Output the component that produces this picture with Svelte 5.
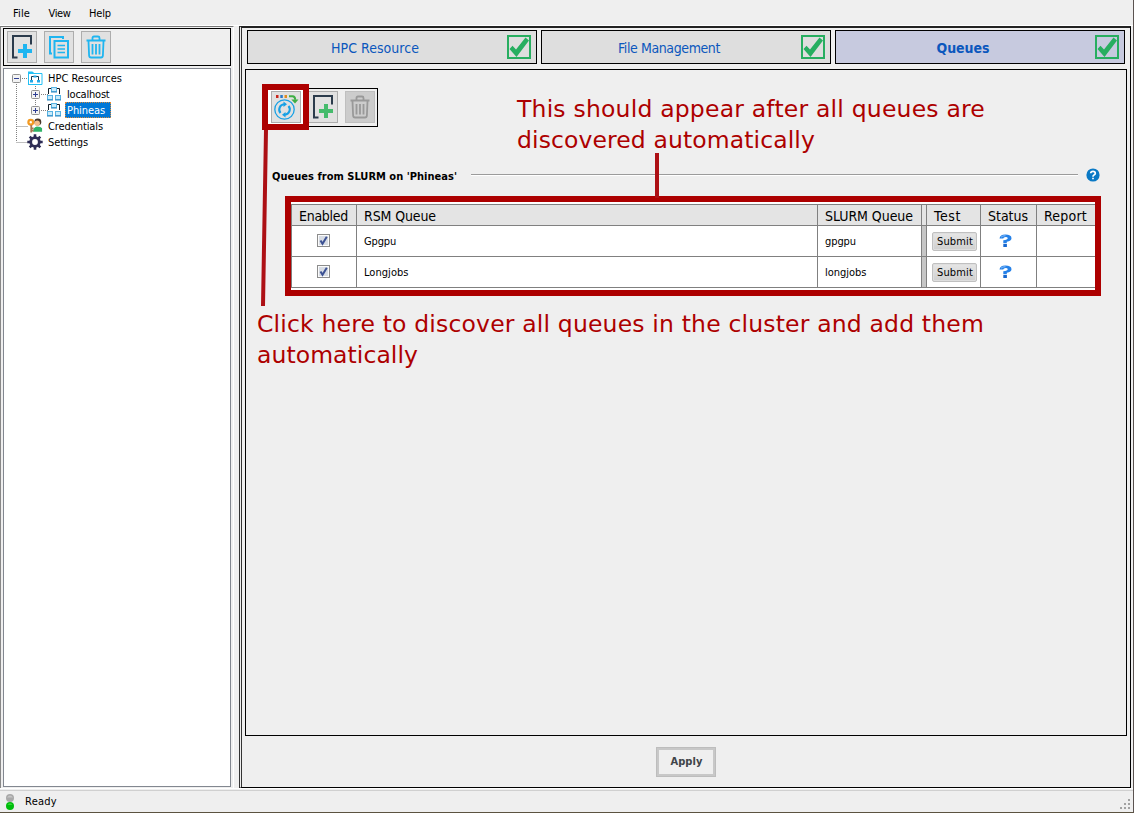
<script>
  const menus = [
    { label: 'File', width: 17 },
    { label: 'View', width: 22 },
    { label: 'Help', width: 22 }
  ];
  const tabs = [
    { label: 'HPC Resource', width: 88, active: false },
    { label: 'File Management', width: 102, active: false },
    { label: 'Queues', width: 53, active: true }
  ];
  const tree = [
    { label: 'HPC Resources', icon: 'folder', level: 0, width: 74 },
    { label: 'localhost', icon: 'cluster', level: 1, width: 42.5 },
    { label: 'Phineas', icon: 'cluster', level: 1, width: 38, selected: true },
    { label: 'Credentials', icon: 'key', level: 0, width: 55 },
    { label: 'Settings', icon: 'gear', level: 0, width: 40 }
  ];
  const headers = [
    { label: 'Enabled', width: 49 },
    { label: 'RSM Queue', width: 72 },
    { label: 'SLURM Queue', width: 88 },
    { label: '' },
    { label: 'Test', width: 27 },
    { label: 'Status', width: 40 },
    { label: 'Report', width: 43 }
  ];
  const rows = [
    { name: 'Gpgpu', nameWidth: 32, queue: 'gpgpu', queueWidth: 31 },
    { name: 'Longjobs', nameWidth: 44.5, queue: 'longjobs', queueWidth: 41.5 }
  ];

  // Spreads the letters so that the label takes the given width.
  function fit(node, width) {
    if (!width) return;
    const natural = node.getBoundingClientRect().width;
    node.style.letterSpacing = (width - natural) / node.textContent.length + 'px';
  }
</script>

{#snippet trash(color)}
  <svg width="22" height="24" viewBox="0 0 22 24" fill="none" stroke={color} stroke-width="1.8">
    <path d="M1.5 5.5h19M7.5 5V3q0-1.5 1.5-1.5h4q1.5 0 1.5 1.5v2M3.5 6.5l.6 14q.1 2 2 2h9.8q1.900 0 2-2l.6-14" />
    <path d="M7.500 9v10.500M11 9v10.500M14.500 9v10.500" />
  </svg>
{/snippet}

{#snippet add(color)}
  <svg width="22" height="26" viewBox="0 0 22 26">
    <path d="M20 10.500V2H2V23.500H6.500" fill="none" stroke="#2b3b4c" stroke-width="2" />
    <path d="M14 10v14M7 17h14" stroke={color} stroke-width="4" />
  </svg>
{/snippet}

<div class="window">
  <nav class="menu">
    {#each menus as m}<span class="t" use:fit={m.width}>{m.label}</span>{/each}
  </nav>

  <div class="body">
    <aside>
      <div class="tools">
        <button>{@render add('#1fb5f0')}</button>
        <button>
          <svg width="22" height="24" viewBox="0 0 22 24" fill="none" stroke="#1fb5f0" stroke-width="2">
            <path d="M4 18.500H2V2h13v2" /><rect x="6.500" y="6" width="13.500" height="16.500" />
            <path d="M9.500 10.500h7.500M9.500 14h7.500M9.500 17.500h7.500" stroke-width="1.600" />
          </svg>
        </button>
        <button>{@render trash('#1fb5f0')}</button>
      </div>
      <div class="tree">
        <svg class="guides" width="48" height="82" viewBox="0 0 48 82">
          <g stroke="#808080" stroke-dasharray="1 1" fill="none">
            <path d="M12.500 13v60M18 9.500h6M12.500 57.500h12M12.500 73.500h12M31.500 15v27M37 25.500h7M37 41.500h7" />
          </g>
          {#each [[8, 5], [27, 21], [27, 37]] as [x, y], i}
            <rect x={x + 0.5} y={y + 0.5} width="8" height="8" rx="1" fill="#f3f3f3" stroke="#919191" />
            <path d={`M${x + 2} ${y + 4.500}h5`} stroke="#2f3f94" />
            {#if i}<path d={`M${x + 4.500} ${y + 2}v5`} stroke="#2f3f94" />{/if}
          {/each}
        </svg>
        {#each tree as n}
          <div class="node" class:child={n.level}>
            {#if n.icon === 'folder'}
              <svg width="16" height="16" viewBox="0 0 16 16">
                <path d="M1.500 14.500V2.500h5M6 3.500h9v11H1" fill="#fff" stroke="#22c0f5" />
                <path d="M1 1.500h4.500L7 4H1z" fill="#22c0f5" />
                <path d="M4.500 10.500V6.500h7v4" fill="none" stroke="#17364f" />
                <path d="M3 10h3v2.500H3zM10 10h3v2.500h-3zM6.500 5.500h3v2h-3z" fill="#22a8e8" />
              </svg>
            {:else if n.icon === 'cluster'}
              <svg width="16" height="16" viewBox="-1 0 16 16">
                <path d="M1.500 8V2.500h11V8" fill="none" stroke="#111d28" />
                <g fill="#c9ebfb" stroke="#58b2e2"><rect x="4.500" y="1.500" width="5" height="4" /><rect x=".5" y="9.500" width="5" height="4" /><rect x="8.500" y="9.500" width="5" height="4" /></g>
                <path d="M4 6h6M0 14h6M8 14h6" stroke="#2b86c0" />
              </svg>
            {:else if n.icon === 'key'}
              <svg width="17" height="16" viewBox="0 0 17 16">
                <circle cx="11.500" cy="3.700" r="3.700" fill="#49382a" /><circle cx="10.800" cy="5" r="2.900" fill="#f4bd8a" />
                <path d="M6.500 14q-.5-4 4-5.500 4.500.2 5.500 2V14z" fill="#2fb367" />
                <circle cx="4" cy="4" r="2.500" fill="#fff" stroke="#f39a22" stroke-width="2.400" />
                <path d="M4.500 7v8M5 10.500h2M5 13h2" stroke="#a77852" stroke-width="1.900" />
              </svg>
            {:else}
              <svg width="16" height="16" viewBox="0 0 16 16">
                <g stroke="#2d2c55" stroke-width="2.600"><path d="M8 .3v15.400M.3 8h15.400M2.700 2.700l10.600 10.600M13.300 2.700L2.700 13.300" /></g>
                <circle cx="8" cy="8" r="4.300" fill="#fff" stroke="#2d2c55" stroke-width="2.800" />
              </svg>
            {/if}
            <span class="name" class:selected={n.selected}><span class="t" use:fit={n.width}>{n.label}</span></span>
          </div>
        {/each}
      </div>
    </aside>

    <main>
      <div class="tabs">
        {#each tabs as tab}
          <div class="tab" class:active={tab.active}>
            <span class="t" use:fit={tab.width}>{tab.label}</span>
            <svg width="24" height="24" viewBox="0 0 24 24">
              <rect x="1" y="1" width="22" height="22" fill="none" stroke="#27ae60" stroke-width="2" />
              <path d="M2.500 14l3-3.200L9 14.500 18.500 2.500l3.500 3L9.500 22z" fill="#27ae60" />
            </svg>
          </div>
        {/each}
      </div>

      <section>
        <div class="tools queue-tools">
          <button>
            <svg width="26" height="28" viewBox="0 0 26 28" fill="none">
              <path d="M3 3.500h2.500" stroke="#c9261c" stroke-width="3" /><path d="M7.300 3.500h2.500" stroke="#2878c8" stroke-width="3" /><path d="M11.500 3.500H14" stroke="#e08b20" stroke-width="3" />
              <path d="M16 3.300h3.500q2.700 0 2.700 3.500" stroke="#3fae45" stroke-width="2" /><path d="M18.300 6.500h7.200L22 10.500z" fill="#3fae45" />
              <g stroke="#16a0e5"><circle cx="11.500" cy="16.500" r="9.700" stroke-width="1.300" />
                <path d="M7.500 20A5.300 5.300 0 0 1 11 11.300M15.500 13A5.300 5.300 0 0 1 12 21.700" stroke-width="2.100" /></g>
              <path d="M10.500 8.500v5.500l3.500-2.700zM12.500 24.500V19L9 21.700z" fill="#16a0e5" />
            </svg>
          </button>
          <button>{@render add('#45bb6c')}</button>
          <button class="off">{@render trash('#999')}</button>
        </div>

        <header>
          <b class="t" use:fit={185}>Queues from SLURM on 'Phineas'</b>
          <i></i>
          <svg width="14" height="14" viewBox="0 0 14 14"><circle cx="7" cy="7" r="6.600" fill="#0a79c5" />
            <path d="M4.700 5.300Q4.800 3.300 7 3.300T9.300 5.200Q9.300 6.300 8 7 7 7.500 7 8.700M7 9.700v1.600" fill="none" stroke="#fff" stroke-width="1.700" /></svg>
        </header>

        <div class="highlight">
          <div class="table">
            {#each headers as h}
              <div class="cell head" class:gap={!h.label}>{#if h.label}<span class="t" use:fit={h.width}>{h.label}</span>{/if}</div>
            {/each}
            {#each rows as r}
              <div class="cell center">
                <svg width="13" height="13" viewBox="0 0 13 13"><rect x=".5" y=".5" width="12" height="12" fill="#fbfbfb" stroke="#8c8c8c" /><rect x="2" y="2" width="9" height="9" fill="#d7dce4" />
                  <path d="M3.500 6.500l2 3.300L9.800 2.800" fill="none" stroke="#3c5193" stroke-width="2" /></svg>
              </div>
              <div class="cell"><span class="t" use:fit={r.nameWidth}>{r.name}</span></div>
              <div class="cell"><span class="t" use:fit={r.queueWidth}>{r.queue}</span></div>
              <div class="cell gap"></div>
              <div class="cell test"><span class="submit"><span class="t" use:fit={36}>Submit</span></span></div>
              <div class="cell status">
                <svg width="13" height="13" viewBox="0 0 13 13"><path d="M.5 4.500Q1 .5 6.300.5q6.200 0 6.200 3.700 0 2.800-4.700 3.600v1.400H4.300V6.300Q8.700 6 8.700 4.300 8.700 3 6.700 3 4.500 3 4.200 4.500z" fill="#2581e8" /><path d="M4.300 10h3.600v3H4.300z" fill="#1767cf" /><path d="M2 3.200Q3.500 1.600 6.500 1.700" stroke="#86bdf8" fill="none" /></svg>
              </div>
              <div class="cell"></div>
            {/each}
          </div>
        </div>
      </section>
      <footer><button class="apply"><b class="t" use:fit={32}>Apply</b></button></footer>
    </main>
  </div>

  <div class="statusbar">
    <svg width="10" height="18" viewBox="0 0 10 18"><circle cx="5" cy="5" r="4" fill="#a9a9a9" /><path d="M2 4.500q3-4 6 0" fill="#c6c6c6" /><circle cx="5" cy="13" r="4" fill="#00bd0c" /><path d="M2.500 12q2.500-3.500 5 0" fill="#35db35" /></svg>
    <span class="t" use:fit={32}>Ready</span>
    <svg class="grip" width="12" height="12" viewBox="0 0 12 12" fill="#a2a2a2"><path d="M8 0h2v2H8zM4 4h2v2H4zM8 4h2v2H8zM0 8h2v2H0zM4 8h2v2H4zM8 8h2v2H8z" /></svg>
  </div>

  <svg class="notes" width="1134" height="813" viewBox="0 0 1134 813">
    <path d="M268 90h35v34h-35zM271 91v32h30V91z" fill="#fff" fill-rule="evenodd" />
    <rect x="265" y="87" width="41" height="40" fill="none" stroke="#ad0000" stroke-width="6" />
    <path d="M266 130L263 306M657 153v45" stroke="#ad1015" stroke-width="4" />
  </svg>
  <div class="note top"><span class="t" use:fit={468}>This should appear after all queues are</span><span class="t" use:fit={298}>discovered automatically</span></div>
  <div class="note bottom"><span class="t" use:fit={727}>Click here to discover all queues in the cluster and add them</span><span class="t" use:fit={161}>automatically</span></div>
</div>

<style>
  :global(body) { margin: 0; }
  * { box-sizing: border-box; }
  svg { display: block; flex: none; }
  .t { display: inline-block; white-space: nowrap; flex: none; }
  .tab .t, .cell .t { padding-top: 2px; }
  .window { position: relative; width: 1134px; height: 813px; display: flex; flex-direction: column; overflow: hidden; background: #efefef; border-right: 1px solid #5b5351; border-bottom: 1px solid #5b5340; font: 11px/16px "DejaVu Sans Condensed", "DejaVu Sans", sans-serif; font-stretch: condensed; color: #000; }
  .menu { height: 26px; padding: 6px 13px 0; display: flex; gap: 18.500px; border-bottom: 1px solid #fff; flex: none; }
  .body { height: 763px; display: flex; border-bottom: 1px solid #fff; }
  aside { width: 234px; flex: none; padding: 1px 2px 0; border-top: 1px solid #777; border-left: 1px solid #888; border-right: 1px solid #fff; }
  .tools { display: flex; border: 1px solid #000; }
  aside .tools { width: 228px; height: 38px; padding: 2px 3px; gap: 7px; }
  .tools button { width: 30px; height: 32px; padding: 0; border: 1px solid #adadad; background: #e1e1e1; display: flex; align-items: center; justify-content: center; }
  .tools .off { background: #ccc; border-color: #bfbfbf; }
  .tree { position: relative; width: 228px; height: 719px; margin-top: 2px; padding-top: 1px; background: #fff; border: 1px solid #828790; }
  .guides { position: absolute; left: 0; top: 0; }
  .node { height: 16px; display: flex; padding-left: 23px; gap: 3px; position: relative; }
  .node.child { padding-left: 42px; }
  .node > svg { width: 16px; }
  .name { height: 16px; padding: 1px 2px 0; margin-right: 1px; }
  .name.selected { background: #0078d7; color: #fff; outline: 1px dotted #d98b3c; outline-offset: -1px; padding-right: 6px; }
  main { margin-left: 5px; width: 892px; border: 1px solid #000; border-left: 3px double #333; border-top: 2px solid #222; padding: 2px 3px 0; display: flex; flex-direction: column; }
  .tabs { display: flex; gap: 4px; padding-left: 2px; flex: none; }
  .tab { width: 290px; height: 34px; border: 1px solid #000; background: #dedede; display: grid; grid-template-columns: 264px 24px; justify-content: end; align-items: center; justify-items: center; padding-right: 5px; color: #0b57bd; font-size: 14px; }
  .tab.active { background: #c7cadf; font-weight: bold; }
  section { width: 882px; height: 667px; margin-top: 5px; border: 1px solid #000; padding: 18px 25px 0 22px; flex: none; }
  .queue-tools { width: 110px; height: 39px; padding: 2px; gap: 7px; }
  header { display: flex; align-items: center; height: 16px; margin: 40px 0 0 4px; }
  header .t { padding-top: 3px; }
  header i { margin-left: 14px; width: 607px; height: 2px; border-top: 1px solid #9b9b9b; border-bottom: 1px solid #fff; margin-top: -1px; }
  header svg { margin-left: 8px; }
  .highlight { width: 816px; height: 100px; margin: 13px 0 0 17px; border: 6px solid #ad0000; background: #fff; padding-top: 2px; }
  .table { display: grid; grid-template-columns: 65px 461px 104px 5px 54px 56px 58px; grid-template-rows: 21px 31px 31px; border-top: 1px solid #808080; border-left: 1px solid #808080; width: 804px; overflow: hidden; }
  .cell { border-right: 1px solid #808080; border-bottom: 1px solid #808080; padding-left: 7px; display: flex; align-items: center; }
  .cell:nth-child(7n) { border-right: 0; }
  .head { background: #e4e4e4; font-size: 14px; }
  .center { justify-content: center; padding: 0 2px 1px 0; }
  .gap { background: #c6c6c6; padding: 0; }
  .head.gap { background: #e4e4e4; }
  .test { padding-left: 5px; }
  .submit { width: 45px; height: 19px; border: 1px solid #c0c0c0; border-radius: 2px; background: linear-gradient(#e6e6e6, #cfcfcf); display: flex; align-items: center; padding-left: 4px; box-shadow: inset 0 0 0 1px #dedede; }
  .status { padding: 0 0 1px 18px; }
  footer { padding-top: 11px; display: flex; padding-left: 411px; }
  .apply { width: 60px; height: 30px; padding: 0 0 0 1px; border: 3px solid #c8c8c8; outline: 1px solid #bdbdbd; outline-offset: -1px; background: #efefef; font: inherit; color: #404448; display: flex; align-items: center; justify-content: center; }
  .statusbar { flex: 1; border-top: 1px solid #d0d0d0; margin-top: 1px; display: flex; align-items: center; padding-left: 5px; gap: 10px; }
  .grip { margin-left: auto; align-self: flex-end; margin-right: 1px; margin-bottom: 1px; }
  .notes { position: absolute; inset: 0; pointer-events: none; }
  .note { position: absolute; display: flex; flex-direction: column; align-items: flex-start; font: 23.500px/31px "DejaVu Sans", sans-serif; color: #ad0000; }
  .note.top { left: 517px; top: 94px; }
  .note.bottom { left: 257px; top: 309px; }
</style>
